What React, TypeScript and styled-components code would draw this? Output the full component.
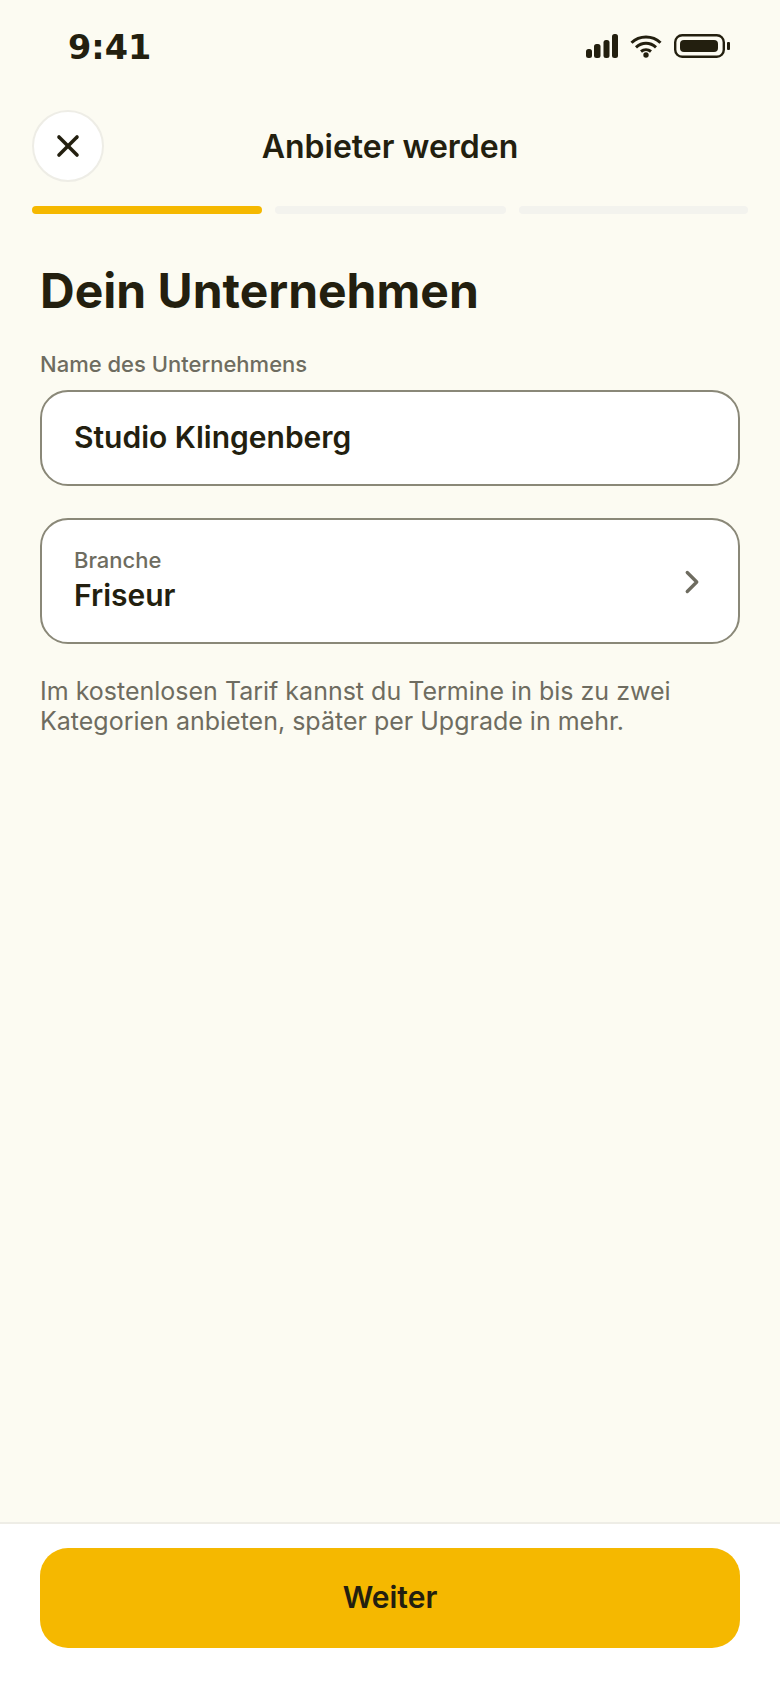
import { X, ChevronRight } from 'lucide-react';
import styled, { createGlobalStyle } from 'styled-components';

const GlobalStyle = createGlobalStyle`
  html, body {
    margin: 0;
    padding: 0;
    background: #fcfbf2;
  }
  * {
    box-sizing: border-box;
  }
`;

const Screen = styled.div`
  width: 780px;
  height: 1688px;
  display: flex;
  flex-direction: column;
  background: #fcfbf2;
  color: #231f0f;
  font-family: Inter, 'Noto Sans', sans-serif;
`;

const StatusBar = styled.div`
  height: 94px;
  padding: 25px 50px 0 68px;
  display: flex;
  justify-content: space-between;
  align-items: flex-start;
`;

const Time = styled.span`
  font-family: 'DejaVu Sans', sans-serif;
  font-size: 33.5px;
  line-height: 46px;
  font-weight: 700;
`;

const StatusIcons = styled.div`
  display: flex;
  align-items: center;
  gap: 12px;
  margin-top: 9px;
`;

const Header = styled.header`
  margin: 16px 32px 0;
  height: 72px;
  display: flex;
  align-items: center;
  position: relative;
`;

const CloseButton = styled.button`
  width: 72px;
  height: 72px;
  padding: 0;
  border-radius: 50%;
  border: 2px solid #eeede6;
  background: #ffffff;
  color: #231f0f;
  display: flex;
  align-items: center;
  justify-content: center;
`;

const HeaderTitle = styled.h1`
  position: absolute;
  left: 0;
  right: 0;
  margin: 2px 0 0;
  text-align: center;
  font-size: 32px;
  line-height: 40px;
  font-weight: 600;
  pointer-events: none;
`;

const Progress = styled.div`
  margin: 24px 32px 0;
  display: grid;
  grid-template-columns: 230px 231px 229px;
  gap: 13px;
`;

const ProgressStep = styled.div<{ $active?: boolean }>`
  height: 8px;
  border-radius: 4px;
  background: ${(props) => (props.$active ? '#f5b800' : '#f3f3ee')};
`;

const Main = styled.main`
  flex: 1;
  padding: 48px 40px 0;
  display: flex;
  flex-direction: column;
`;

const Heading = styled.h2`
  margin: 0;
  font-size: 48px;
  line-height: 58px;
  font-weight: 700;
`;

const FieldLabel = styled.label`
  display: block;
  margin-top: 29px;
  font-size: 22px;
  line-height: 30px;
  font-weight: 500;
  color: #6e6c60;
`;

const FieldBox = styled.div`
  margin-top: 11px;
  height: 96px;
  padding: 0 32px 2px;
  display: flex;
  align-items: center;
  background: #ffffff;
  border: 2px solid #8a8878;
  border-radius: 28px;
  font-size: 30px;
  font-weight: 600;
`;

const SelectBox = styled(FieldBox)`
  margin-top: 32px;
  height: 126px;
  padding-bottom: 0;
  justify-content: space-between;
`;

const SelectText = styled.div`
  display: flex;
  flex-direction: column;
  gap: 1px;
  padding-bottom: 3px;
`;

const SelectLabel = styled.span`
  font-size: 22px;
  line-height: 30px;
  font-weight: 500;
  color: #6e6c60;
`;

const SelectValue = styled.span`
  font-size: 30px;
  line-height: 38px;
  font-weight: 600;
`;

const ChevronSlot = styled.span`
  display: flex;
  margin: 2px -5px 0 0;
  color: #6e6c60;
`;

const Hint = styled.p`
  margin: 32px 0 0;
  font-size: 25px;
  line-height: 30px;
  color: #6e6c60;
`;

const Footer = styled.footer`
  height: 166px;
  padding: 24px 40px 0;
  background: #ffffff;
  border-top: 2px solid #eeede6;
`;

const PrimaryButton = styled.button`
  width: 100%;
  height: 100px;
  padding: 0 0 3px;
  border: 0;
  border-radius: 28px;
  background: #f5b800;
  color: #231f0f;
  font-family: inherit;
  font-size: 30px;
  font-weight: 600;
`;

const SignalIcon = () => (
  <svg width="32" height="24" viewBox="0 0 32 24" fill="#231f0f">
    <rect x="0" y="15" width="6" height="9" rx="2.5" />
    <rect x="8" y="10" width="6.5" height="14" rx="2.5" />
    <rect x="17.5" y="6" width="6" height="18" rx="2.5" />
    <rect x="26" y="0" width="6" height="24" rx="2.5" />
  </svg>
);

const WifiIcon = () => (
  <svg width="32" height="23" viewBox="0 0 32 23" fill="none" stroke="#231f0f" strokeWidth="3">
    <path d="M1.5 7.8C9.5 0 22.5 0 30.5 7.8" />
    <path d="M6 12.4C12 7 20 7 26 12.4" />
    <path d="M11 16.5C14 14 18 14 21 16.5" />
    <circle cx="16" cy="20" r="2.7" fill="#231f0f" stroke="none" />
  </svg>
);

const BatteryIcon = () => (
  <svg width="56" height="24" viewBox="0 0 56 24">
    <rect x="1.2" y="1.2" width="48.6" height="21.6" rx="7" fill="none" stroke="#231f0f" strokeWidth="2.4" />
    <rect x="6" y="6" width="38" height="12" rx="4" fill="#231f0f" />
    <rect x="53" y="8" width="3" height="8" rx="1" fill="#231f0f" />
  </svg>
);

export default function App() {
  return (
    <Screen>
      <GlobalStyle />
      <StatusBar>
        <Time>9:41</Time>
        <StatusIcons>
          <SignalIcon />
          <WifiIcon />
          <BatteryIcon />
        </StatusIcons>
      </StatusBar>

      <Header>
        <CloseButton aria-label="Schließen">
          <X size={36} strokeWidth={2.4} />
        </CloseButton>
        <HeaderTitle>Anbieter werden</HeaderTitle>
      </Header>

      <Progress>
        <ProgressStep $active />
        <ProgressStep />
        <ProgressStep />
      </Progress>

      <Main>
        <Heading>Dein Unternehmen</Heading>
        <FieldLabel>Name des Unternehmens</FieldLabel>
        <FieldBox>Studio Klingenberg</FieldBox>
        <SelectBox>
          <SelectText>
            <SelectLabel>Branche</SelectLabel>
            <SelectValue>Friseur</SelectValue>
          </SelectText>
          <ChevronSlot>
            <ChevronRight size={38} strokeWidth={2.1} />
          </ChevronSlot>
        </SelectBox>
        <Hint>
          Im kostenlosen Tarif kannst du Termine in bis zu zwei
          <br />
          Kategorien anbieten, später per Upgrade in mehr.
        </Hint>
      </Main>

      <Footer>
        <PrimaryButton>Weiter</PrimaryButton>
      </Footer>
    </Screen>
  );
}
